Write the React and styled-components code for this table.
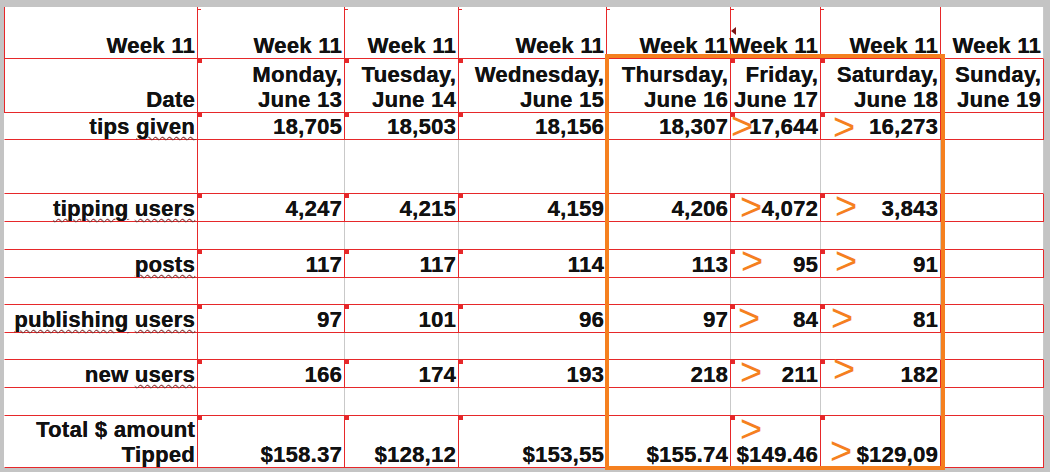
import React from 'react';
import styled, { createGlobalStyle, css } from 'styled-components';

const RED = '#e6282a';
const GRID = '#c9c9c9';
const ORANGE = '#f5801f';

const GlobalStyle = createGlobalStyle`
  html, body {
    margin: 0;
    padding: 0;
    background: #c4c4c4;
  }
  body {
    font-family: "Liberation Sans", Arial, sans-serif;
  }
`;

// column widths include the right border line
const colWidths = [194, 147, 114, 148, 124, 90, 120, 103];
const rowHeights = [52, 54, 27, 54, 28, 28, 28, 27, 28, 27, 28, 28, 52];

// columns that carry the little red corner square
const markedCols = [1, 2, 3, 5, 6];

const dates = [
    ['Monday,', 'June 13'],
    ['Tuesday,', 'June 14'],
    ['Wednesday,', 'June 15'],
    ['Thursday,', 'June 16'],
    ['Friday,', 'June 17'],
    ['Saturday,', 'June 18'],
    ['Sunday,', 'June 19'],
];

const Spell = styled.span`
    text-decoration: underline wavy rgba(226, 70, 70, 0.55);
    text-decoration-thickness: 1px;
    text-underline-offset: 2px;
`;

const rows = [
    { kind: 'week', label: ['Week 11'], values: Array(7).fill(['Week 11']) },
    { kind: 'date', label: ['Date'], values: dates },
    {
        kind: 'data',
        label: [<>tips <Spell>given</Spell></>],
        values: ['18,705', '18,503', '18,156', '18,307', '17,644', '16,273', ''],
        arrows: { 5: [0, 3], 6: [12, 4] },
    },
    { kind: 'gap' },
    {
        kind: 'data',
        label: [<><Spell>tipping</Spell> <Spell>users</Spell></>],
        values: ['4,247', '4,215', '4,159', '4,206', '4,072', '3,843', ''],
        arrows: { 5: [9, 3], 6: [14, 2] },
    },
    { kind: 'gap' },
    {
        kind: 'data',
        label: [<Spell>posts</Spell>],
        values: ['117', '117', '114', '113', '95', '91', ''],
        arrows: { 5: [10, 1], 6: [14, 1] },
    },
    { kind: 'gap' },
    {
        kind: 'data',
        label: [<><Spell>publishing</Spell> <Spell>users</Spell></>],
        values: ['97', '101', '96', '97', '84', '81', ''],
        arrows: { 5: [7, 3], 6: [10, 3] },
    },
    { kind: 'gap' },
    {
        kind: 'data',
        label: [<>new <Spell>users</Spell></>],
        values: ['166', '174', '193', '218', '211', '182', ''],
        arrows: { 5: [9, 2], 6: [12, -1] },
    },
    { kind: 'gap' },
    {
        kind: 'total',
        label: ['Total $ amount', 'Tipped'],
        values: ['$158.37', '$128,12', '$153,55', '$155.74', '$149.46', '$129,09', ''],
        arrows: { 5: [9, 3], 6: [9, 25] },
    },
];

const Page = styled.div`
    height: 472px;
    overflow: hidden;
    box-sizing: border-box;
    padding: 7px 0 0 4px;
`;

const Sheet = styled.div`
    position: relative;
    display: grid;
    grid-template-columns: ${colWidths.map((w) => `${w}px`).join(' ')};
    grid-template-rows: ${rowHeights.map((h) => `${h}px`).join(' ')};
    width: ${colWidths.reduce((a, b) => a + b, 0)}px;
    background: #fff;
`;

const verticalColor = (kind, col) => {
    if (col === 0) return RED;
    if (kind === 'gap') return GRID;
    if (kind === 'week' && col === 7) return GRID;
    return RED;
};

const Cell = styled.div`
    position: relative;
    box-sizing: border-box;
    display: flex;
    flex-direction: column;
    justify-content: flex-end;
    align-items: flex-end;
    padding: 0 2px 0 0;
    border-bottom: 1px solid ${RED};
    border-right: 1px solid ${(p) => verticalColor(p.$kind, p.$col)};
    ${(p) => p.$col === 0 && css`
        border-left: 1px solid ${p.$kind === 'week' || p.$kind === 'date' ? RED : 'transparent'};
    `}
    color: #111;
    font-size: 22px;
    font-weight: 700;
    line-height: 25px;
    letter-spacing: 0.3px;
    text-align: right;
    white-space: nowrap;
    text-shadow: 0.3px 0 0 #111;

    ${(p) => p.$mark && css`
        &::before {
            content: '';
            position: absolute;
            left: -1px;
            top: -1px;
            width: 5px;
            height: 5px;
            background: ${RED};
            z-index: 2;
        }
    `}

    ${(p) => p.$tick && css`
        &::after {
            content: '';
            position: absolute;
            left: -1px;
            top: 2px;
            width: 4px;
            height: 1px;
            background: ${RED};
        }
    `}
`;

const Line = styled.span`
    display: block;
`;

const Arrow = styled.span`
    position: absolute;
    left: ${(p) => p.$x}px;
    top: ${(p) => p.$y}px;
    font-family: "Liberation Sans", Arial, sans-serif;
    font-size: 38px;
    font-weight: 400;
    line-height: 20px;
    letter-spacing: 0;
    text-shadow: none;
    color: ${ORANGE};
    z-index: 4;
`;

const Cursor = styled.span`
    position: absolute;
    left: 0;
    top: 20px;
    width: 0;
    height: 0;
    border-top: 4px solid transparent;
    border-bottom: 4px solid transparent;
    border-right: 5px solid #7a1414;
    z-index: 3;
`;

const Highlight = styled.div`
    position: absolute;
    left: 601px;
    top: 47px;
    width: 340px;
    height: 416px;
    box-sizing: border-box;
    border: 4px solid ${ORANGE};
    pointer-events: none;
    z-index: 3;
`;

const renderLines = (lines) =>
    (Array.isArray(lines) ? lines : [lines]).map((line, i) => <Line key={i}>{line}</Line>);

const App = () => {
    return (
        <>
            <GlobalStyle />
            <Page>
                <Sheet>
                    {rows.map((row, r) => {
                        const cells = [];
                        for (let c = 0; c < 8; c++) {
                            const hasMark =
                                c > 0 && row.kind !== 'gap' && row.kind !== 'week' && markedCols.includes(c);
                            let content = null;
                            if (row.kind !== 'gap') {
                                content = c === 0 ? renderLines(row.label) : renderLines(row.values[c - 1]);
                            }
                            const arrow = row.arrows && row.arrows[c];
                            cells.push(
                                <Cell
                                    key={`${r}-${c}`}
                                    $kind={row.kind}
                                    $col={c}
                                    $mark={hasMark}
                                    $tick={row.kind === 'week' && c > 0 && c < 7}
                                >
                                    {row.kind === 'week' && c === 5 && <Cursor />}
                                    {arrow && <Arrow $x={arrow[0]} $y={arrow[1]}>&gt;</Arrow>}
                                    {content}
                                </Cell>
                            );
                        }
                        return cells;
                    })}
                    <Highlight />
                </Sheet>
            </Page>
        </>
    );
};

export default App;
